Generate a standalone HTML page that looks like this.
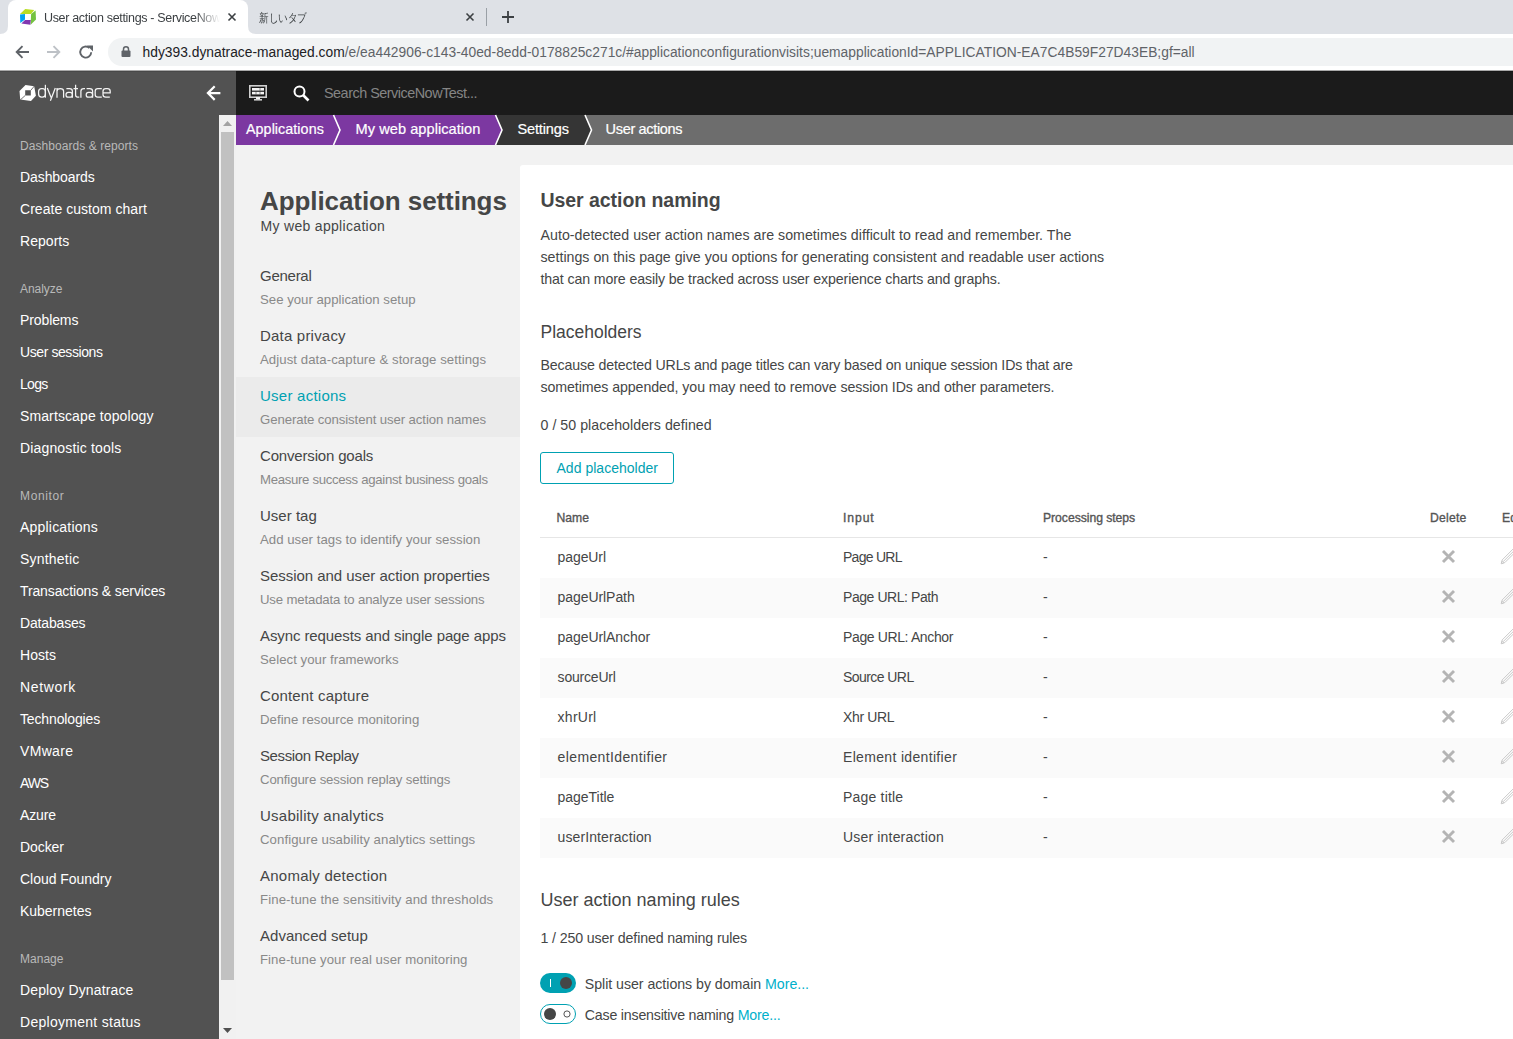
<!DOCTYPE html>
<html><head><meta charset="utf-8"><title>User action settings</title><style>
*{box-sizing:border-box;margin:0;padding:0}
html,body{width:1513px;height:1039px;overflow:hidden;background:#f2f2f2;font-family:"Liberation Sans",sans-serif;color:#454646}
.a{position:absolute;white-space:nowrap}
svg{position:absolute;overflow:visible}
</style></head><body>
<div class="a" style="left:0px;top:0px;width:1513px;height:70px;background:#dee1e6;"></div>
<div class="a" style="left:0px;top:34px;width:1513px;height:36px;background:#ffffff;"></div>
<div class="a" style="left:8px;top:0px;width:240px;height:34px;background:#ffffff;border-radius:8px 8px 0 0"></div>
<svg style="left:0;top:26px" width="8" height="8"><path d="M0 8 Q8 8 8 0 V8 Z" fill="#fff"/></svg>
<svg style="left:248px;top:26px" width="8" height="8"><path d="M8 8 Q0 8 0 0 V8 Z" fill="#fff"/></svg>
<svg style="left:14px;top:4px" width="28" height="26" viewBox="0 0 28 26">
<path d="M6 10 L11.25 4.9 L20.25 6.1 L17 9.9 Z" fill="#b9dd23"/>
<path d="M21.6 6.6 L22 15.5 L16.6 20.8 L17.1 10 Z" fill="#74c23f"/>
<path d="M6 10.6 L11 10 L11 15.4 L6.3 19 Z" fill="#00a3f0"/>
<path d="M11 16 L16.8 16 L16.3 20.8 L7.4 19.6 Z" fill="#8137b0"/>
</svg>
<div class="a" style="left:44px;top:10px;width:176px;overflow:hidden;font-size:12.5px;line-height:16px;color:#3c4043;letter-spacing:-0.33px;-webkit-mask-image:linear-gradient(90deg,#000 86%,transparent)">User action settings - ServiceNow</div>
<svg style="left:228px;top:13px" width="8" height="8"><path d="M0.5 0.5 L7.5 7.5 M7.5 0.5 L0.5 7.5" stroke="#3c4043" stroke-width="1.6"/></svg>
<div class="a" style="left:259px;top:10px;font-size:12px;line-height:16px;color:#3c4043;transform:scaleX(0.8);transform-origin:0 0">新しいタブ</div>
<svg style="left:466px;top:13px" width="8" height="8"><path d="M0.5 0.5 L7.5 7.5 M7.5 0.5 L0.5 7.5" stroke="#3c4043" stroke-width="1.6"/></svg>
<div class="a" style="left:486px;top:8px;width:1px;height:18px;background:#9aa0a6;"></div>
<svg style="left:502px;top:11px" width="12" height="12"><path d="M6 0 V12 M0 6 H12" stroke="#3c4043" stroke-width="1.8"/></svg>
<svg style="left:15px;top:45px" width="14" height="14" viewBox="0 0 14 14"><path d="M14 7 H2 M7.5 1.2 L1.7 7 L7.5 12.8" stroke="#5f6368" stroke-width="1.9" fill="none"/></svg>
<svg style="left:47px;top:45px" width="14" height="14" viewBox="0 0 14 14"><path d="M0 7 H12 M6.5 1.2 L12.3 7 L6.5 12.8" stroke="#bdc1c6" stroke-width="1.9" fill="none"/></svg>
<svg style="left:79px;top:45px" width="14" height="14" viewBox="0 0 14 14"><path d="M12.2 7.2 A5.5 5.5 0 1 1 10.4 3" stroke="#5f6368" stroke-width="1.9" fill="none"/><path d="M8 0.5 L14 0.5 L14 6.5 Z" fill="#5f6368"/></svg>
<div class="a" style="left:108px;top:38px;width:1450px;height:28px;background:#f1f3f4;border-radius:14px"></div>
<svg style="left:121px;top:46px" width="10" height="11" viewBox="0 0 10 11"><rect x="0.5" y="4.5" width="9" height="6.5" rx="1" fill="#5f6368"/><path d="M2.5 5 V3.3 A2.5 2.5 0 0 1 7.5 3.3 V5" stroke="#5f6368" stroke-width="1.5" fill="none"/></svg>
<div class="a" style="left:142.5px;top:44.32px;font-size:13.8px;line-height:18px;color:#202124;letter-spacing:0.016px;">hdy393.dynatrace-managed.com<span style="color:#5f6368">/e/ea442906-c143-40ed-8edd-0178825c271c/#applicationconfigurationvisits;uemapplicationId=APPLICATION-EA7C4B59F27D43EB;gf=all</span></div>
<div class="a" style="left:0px;top:70px;width:236px;height:969px;background:#525252;"></div>
<div class="a" style="left:236px;top:70px;width:1277px;height:45px;background:#1b1b1b;"></div>
<div class="a" style="left:0px;top:70px;width:1513px;height:1px;background:#a9a9a9;"></div>
<div class="a" style="left:0px;top:71px;width:1513px;height:1px;background:rgba(0,0,0,0.12);"></div>
<svg style="left:16px;top:80px" width="24" height="24" viewBox="0 0 24 24">
<path fill-rule="evenodd" d="M3.5 10.9 L9.5 5 L18.2 6.2 L19.9 15.7 L15 20.9 L4.2 19.6 Z M9.2 10.3 L14.8 10.3 L14.8 15.5 L9.2 15.5 Z" fill="#fff"/>
<path d="M18.4 6 L14.8 10.3 M9.2 15.5 L4.4 19.8" stroke="#525252" stroke-width="0.8"/>
</svg>
<svg style="left:34px;top:80px" width="80" height="24" viewBox="0 0 80 24" fill="none" stroke="#f4f4f4" stroke-width="1.25">
<rect x="4.6" y="8.5" width="6.8" height="8.6" rx="3"/><path d="M11.4 4.8 V17.7"/>
<path d="M13.3 8 L17.1 17.4 M21.3 8 L16.4 20.8"/>
<path d="M23 7.9 V17.7 M23 11.2 Q23 8.5 26.3 8.5 Q29.6 8.5 29.6 11.2 V17.7"/>
<path d="M32.4 8.6 H35.5 Q38.4 8.6 38.4 11.3 V17.7"/><rect x="32" y="12.4" width="6.4" height="4.8" rx="2.3"/>
<path d="M41.6 4.8 V15 Q41.6 17.1 43.6 17.1 H45.3 M39.5 8.5 H44"/>
<path d="M46.9 17.7 V11.2 Q46.9 8.5 49.8 8.5 H51"/>
<path d="M52.6 8.6 H55.7 Q58.6 8.6 58.6 11.3 V17.7"/><rect x="52.2" y="12.4" width="6.4" height="4.8" rx="2.3"/>
<path d="M67.8 8.6 H63.8 Q61.2 8.6 61.2 11.3 V14.4 Q61.2 17.1 63.8 17.1 H67.8"/>
<path d="M69 12.8 H76.2 V11.3 Q76.2 8.6 73.4 8.6 H71.8 Q69 8.6 69 11.3 V14.4 Q69 17.1 71.8 17.1 H75.8"/>
</svg>
<svg style="left:206px;top:85px" width="16" height="16" viewBox="0 0 16 16"><path d="M14.4 8.1 H2.2 M8.7 1.3 L1.9 8.1 L8.7 14.9" stroke="#fff" stroke-width="2.2" fill="none"/></svg>
<svg style="left:249px;top:85px" width="18" height="16" viewBox="0 0 18 16">
<rect x="0.8" y="0.8" width="16.4" height="11.4" fill="none" stroke="#d0d0d0" stroke-width="1.6"/>
<rect x="3" y="3" width="12" height="2.6" fill="#f4f4f4"/>
<rect x="3" y="6.8" width="12" height="2.6" fill="#f4f4f4"/>
<rect x="10.6" y="3" width="0.8" height="2.6" fill="#1b1b1b" opacity="0.6"/>
<rect x="6.6" y="6.8" width="0.8" height="2.6" fill="#1b1b1b" opacity="0.6"/>
<rect x="10.6" y="6.8" width="0.8" height="2.6" fill="#1b1b1b" opacity="0.6"/>
<rect x="7" y="12" width="4" height="2.2" fill="#f4f4f4"/>
<rect x="5" y="14" width="8" height="1.6" fill="#d0d0d0"/>
</svg>
<svg style="left:293.2px;top:84.8px" width="17" height="17" viewBox="0 0 17 17"><circle cx="6.5" cy="6.5" r="5" stroke="#fff" stroke-width="2" fill="none"/><path d="M10 10 L15.5 15.5" stroke="#fff" stroke-width="2.6"/></svg>
<div class="a" style="left:324px;top:83.51px;font-size:14.4px;line-height:19px;color:#858585;letter-spacing:-0.490px;">Search ServiceNowTest...</div>
<div class="a" style="left:20px;top:137.84px;font-size:12px;line-height:16px;color:#b9b9b9;letter-spacing:0.061px;">Dashboards &amp; reports</div>
<div class="a" style="left:20px;top:168.15px;font-size:14px;line-height:18px;color:#ffffff;letter-spacing:-0.078px;">Dashboards</div>
<div class="a" style="left:20px;top:200.15px;font-size:14px;line-height:18px;color:#ffffff;letter-spacing:0.041px;">Create custom chart</div>
<div class="a" style="left:20px;top:232.15px;font-size:14px;line-height:18px;color:#ffffff;letter-spacing:0.045px;">Reports</div>
<div class="a" style="left:20px;top:280.84px;font-size:12px;line-height:16px;color:#b9b9b9;letter-spacing:-0.051px;">Analyze</div>
<div class="a" style="left:20px;top:311.15px;font-size:14px;line-height:18px;color:#ffffff;letter-spacing:-0.106px;">Problems</div>
<div class="a" style="left:20px;top:343.15px;font-size:14px;line-height:18px;color:#ffffff;letter-spacing:-0.410px;">User sessions</div>
<div class="a" style="left:20px;top:375.15px;font-size:14px;line-height:18px;color:#ffffff;letter-spacing:-0.686px;">Logs</div>
<div class="a" style="left:20px;top:407.15px;font-size:14px;line-height:18px;color:#ffffff;letter-spacing:0.109px;">Smartscape topology</div>
<div class="a" style="left:20px;top:439.15px;font-size:14px;line-height:18px;color:#ffffff;letter-spacing:0.158px;">Diagnostic tools</div>
<div class="a" style="left:20px;top:487.84px;font-size:12px;line-height:16px;color:#b9b9b9;letter-spacing:0.631px;">Monitor</div>
<div class="a" style="left:20px;top:518.15px;font-size:14px;line-height:18px;color:#ffffff;letter-spacing:0.200px;">Applications</div>
<div class="a" style="left:20px;top:550.15px;font-size:14px;line-height:18px;color:#ffffff;letter-spacing:0.213px;">Synthetic</div>
<div class="a" style="left:20px;top:582.15px;font-size:14px;line-height:18px;color:#ffffff;letter-spacing:-0.127px;">Transactions &amp; services</div>
<div class="a" style="left:20px;top:614.15px;font-size:14px;line-height:18px;color:#ffffff;letter-spacing:-0.167px;">Databases</div>
<div class="a" style="left:20px;top:646.15px;font-size:14px;line-height:18px;color:#ffffff;letter-spacing:0.051px;">Hosts</div>
<div class="a" style="left:20px;top:678.15px;font-size:14px;line-height:18px;color:#ffffff;letter-spacing:0.657px;">Network</div>
<div class="a" style="left:20px;top:710.15px;font-size:14px;line-height:18px;color:#ffffff;letter-spacing:-0.139px;">Technologies</div>
<div class="a" style="left:20px;top:742.15px;font-size:14px;line-height:18px;color:#ffffff;letter-spacing:0.328px;">VMware</div>
<div class="a" style="left:20px;top:774.15px;font-size:14px;line-height:18px;color:#ffffff;letter-spacing:-1.137px;">AWS</div>
<div class="a" style="left:20px;top:806.15px;font-size:14px;line-height:18px;color:#ffffff;letter-spacing:-0.145px;">Azure</div>
<div class="a" style="left:20px;top:838.15px;font-size:14px;line-height:18px;color:#ffffff;letter-spacing:-0.072px;">Docker</div>
<div class="a" style="left:20px;top:870.15px;font-size:14px;line-height:18px;color:#ffffff;letter-spacing:-0.027px;">Cloud Foundry</div>
<div class="a" style="left:20px;top:902.15px;font-size:14px;line-height:18px;color:#ffffff;letter-spacing:-0.023px;">Kubernetes</div>
<div class="a" style="left:20px;top:950.84px;font-size:12px;line-height:16px;color:#b9b9b9;letter-spacing:0.025px;">Manage</div>
<div class="a" style="left:20px;top:981.15px;font-size:14px;line-height:18px;color:#ffffff;letter-spacing:0.135px;">Deploy Dynatrace</div>
<div class="a" style="left:20px;top:1013.15px;font-size:14px;line-height:18px;color:#ffffff;letter-spacing:0.284px;">Deployment status</div>
<div class="a" style="left:236px;top:115px;width:1277px;height:30px;background:#6d6d6d;"></div>
<svg style="left:236px;top:115px" width="360" height="30" viewBox="0 0 360 30">
<path d="M0 0 H349 L355.5 15 L349 30 H0 Z" fill="#353535"/>
<path d="M349 0 L355.5 15 L349 30" stroke="#fff" stroke-width="1.6" fill="none"/>
<path d="M0 0 H259.5 L266 15 L259.5 30 H0 Z" fill="#7c38a1"/>
<path d="M259.5 0 L266 15 L259.5 30" stroke="#fff" stroke-width="1.6" fill="none"/>
<path d="M0 0 H97.5 L104 15 L97.5 30 H0 Z" fill="#7c38a1"/>
<path d="M97.5 0 L104 15 L97.5 30" stroke="#fff" stroke-width="1.6" fill="none"/>
</svg>
<div class="a" style="left:246px;top:120.04px;font-size:14.3px;line-height:19px;color:#fff;letter-spacing:0.064px;-webkit-text-stroke:0.2px #fff">Applications</div>
<div class="a" style="left:355.5px;top:119.94px;font-size:14.6px;line-height:19px;color:#fff;letter-spacing:0.046px;-webkit-text-stroke:0.2px #fff">My web application</div>
<div class="a" style="left:517.4px;top:119.97px;font-size:14.5px;line-height:19px;color:#fff;letter-spacing:-0.115px;-webkit-text-stroke:0.2px #fff">Settings</div>
<div class="a" style="left:605.6px;top:119.97px;font-size:14.5px;line-height:19px;color:#fff;letter-spacing:-0.327px;-webkit-text-stroke:0.2px #fff">User actions</div>
<div class="a" style="left:219px;top:115px;width:17px;height:924px;background:#f1f1f1;"></div>
<div class="a" style="left:221px;top:132px;width:13px;height:848px;background:#c1c1c1;"></div>
<svg style="left:223px;top:121px" width="9" height="5"><path d="M0 5 L4.5 0 L9 5 Z" fill="#a3a3a3"/></svg>
<svg style="left:223px;top:1028px" width="9" height="5"><path d="M0 0 L4.5 5 L9 0 Z" fill="#505050"/></svg>
<div class="a" style="left:236px;top:145px;width:283px;height:894px;background:#f2f2f2;"></div>
<div class="a" style="left:260px;top:183.99px;font-size:26px;line-height:34px;color:#454646;font-weight:700;letter-spacing:-0.083px;">Application settings</div>
<div class="a" style="left:260.5px;top:217.45px;font-size:14px;line-height:18px;color:#454646;letter-spacing:0.314px;">My web application</div>
<div class="a" style="left:260px;top:265.80px;font-size:15px;line-height:20px;color:#454646;letter-spacing:-0.263px;">General</div>
<div class="a" style="left:260px;top:291.42px;font-size:13.2px;line-height:17px;color:#898989;letter-spacing:0.006px;">See your application setup</div>
<div class="a" style="left:260px;top:325.80px;font-size:15px;line-height:20px;color:#454646;letter-spacing:0.202px;">Data privacy</div>
<div class="a" style="left:260px;top:351.42px;font-size:13.2px;line-height:17px;color:#898989;letter-spacing:0.068px;">Adjust data-capture &amp; storage settings</div>
<div class="a" style="left:236px;top:377px;width:284px;height:60px;background:#ebebeb;"></div>
<div class="a" style="left:260px;top:385.80px;font-size:15px;line-height:20px;color:#00a1b2;letter-spacing:0.248px;">User actions</div>
<div class="a" style="left:260px;top:411.42px;font-size:13.2px;line-height:17px;color:#898989;letter-spacing:-0.096px;">Generate consistent user action names</div>
<div class="a" style="left:260px;top:445.80px;font-size:15px;line-height:20px;color:#454646;letter-spacing:-0.174px;">Conversion goals</div>
<div class="a" style="left:260px;top:471.42px;font-size:13.2px;line-height:17px;color:#898989;letter-spacing:-0.316px;">Measure success against business goals</div>
<div class="a" style="left:260px;top:505.80px;font-size:15px;line-height:20px;color:#454646;letter-spacing:0.014px;">User tag</div>
<div class="a" style="left:260px;top:531.42px;font-size:13.2px;line-height:17px;color:#898989;letter-spacing:0.030px;">Add user tags to identify your session</div>
<div class="a" style="left:260px;top:565.80px;font-size:15px;line-height:20px;color:#454646;letter-spacing:-0.036px;">Session and user action properties</div>
<div class="a" style="left:260px;top:591.42px;font-size:13.2px;line-height:17px;color:#898989;letter-spacing:-0.155px;">Use metadata to analyze user sessions</div>
<div class="a" style="left:260px;top:625.80px;font-size:15px;line-height:20px;color:#454646;letter-spacing:-0.101px;">Async requests and single page apps</div>
<div class="a" style="left:260px;top:651.42px;font-size:13.2px;line-height:17px;color:#898989;letter-spacing:0.034px;">Select your frameworks</div>
<div class="a" style="left:260px;top:685.80px;font-size:15px;line-height:20px;color:#454646;letter-spacing:0.161px;">Content capture</div>
<div class="a" style="left:260px;top:711.42px;font-size:13.2px;line-height:17px;color:#898989;letter-spacing:0.039px;">Define resource monitoring</div>
<div class="a" style="left:260px;top:745.80px;font-size:15px;line-height:20px;color:#454646;letter-spacing:-0.395px;">Session Replay</div>
<div class="a" style="left:260px;top:771.42px;font-size:13.2px;line-height:17px;color:#898989;letter-spacing:-0.121px;">Configure session replay settings</div>
<div class="a" style="left:260px;top:805.80px;font-size:15px;line-height:20px;color:#454646;letter-spacing:0.249px;">Usability analytics</div>
<div class="a" style="left:260px;top:831.42px;font-size:13.2px;line-height:17px;color:#898989;letter-spacing:0.071px;">Configure usability analytics settings</div>
<div class="a" style="left:260px;top:865.80px;font-size:15px;line-height:20px;color:#454646;letter-spacing:0.237px;">Anomaly detection</div>
<div class="a" style="left:260px;top:891.42px;font-size:13.2px;line-height:17px;color:#898989;letter-spacing:0.115px;">Fine-tune the sensitivity and thresholds</div>
<div class="a" style="left:260px;top:925.80px;font-size:15px;line-height:20px;color:#454646;letter-spacing:0.017px;">Advanced setup</div>
<div class="a" style="left:260px;top:951.42px;font-size:13.2px;line-height:17px;color:#898989;letter-spacing:0.063px;">Fine-tune your real user monitoring</div>
<div class="a" style="left:520px;top:165px;width:1100px;height:900px;background:#ffffff;border-radius:3px"></div>
<div class="a" style="left:540.5px;top:187.54px;font-size:19.5px;line-height:25px;color:#454646;font-weight:700;letter-spacing:-0.051px;">User action naming</div>
<div class="a" style="left:540.5px;top:226.08px;font-size:14.2px;line-height:18px;color:#454646;letter-spacing:0.027px;">Auto-detected user action names are sometimes difficult to read and remember. The</div>
<div class="a" style="left:540.5px;top:248.08px;font-size:14.2px;line-height:18px;color:#454646;letter-spacing:0.006px;">settings on this page give you options for generating consistent and readable user actions</div>
<div class="a" style="left:540.5px;top:270.08px;font-size:14.2px;line-height:18px;color:#454646;letter-spacing:-0.127px;">that can more easily be tracked across user experience charts and graphs.</div>
<div class="a" style="left:540.5px;top:320.73px;font-size:17.5px;line-height:23px;color:#454646;letter-spacing:-0.007px;">Placeholders</div>
<div class="a" style="left:540.5px;top:356.08px;font-size:14.2px;line-height:18px;color:#454646;letter-spacing:-0.152px;">Because detected URLs and page titles can vary based on unique session IDs that are</div>
<div class="a" style="left:540.5px;top:378.08px;font-size:14.2px;line-height:18px;color:#454646;letter-spacing:-0.086px;">sometimes appended, you may need to remove session IDs and other parameters.</div>
<div class="a" style="left:540.5px;top:415.78px;font-size:14.2px;line-height:18px;color:#454646;letter-spacing:0.028px;">0 / 50 placeholders defined</div>
<div class="a" style="left:540px;top:452px;width:134px;height:32px;background:#fff;border:1px solid #00a1b2;border-radius:3px"></div>
<div class="a" style="left:556.5px;top:458.85px;font-size:14px;line-height:18px;color:#00a1b2;letter-spacing:0.022px;">Add placeholder</div>
<div class="a" style="left:556.4px;top:509.57px;font-size:12.2px;line-height:16px;color:#555555;letter-spacing:0.061px;-webkit-text-stroke:0.35px #555555">Name</div>
<div class="a" style="left:843px;top:509.57px;font-size:12.2px;line-height:16px;color:#555555;letter-spacing:0.898px;-webkit-text-stroke:0.35px #555555">Input</div>
<div class="a" style="left:1043px;top:509.57px;font-size:12.2px;line-height:16px;color:#555555;letter-spacing:-0.041px;-webkit-text-stroke:0.35px #555555">Processing steps</div>
<div class="a" style="left:1430px;top:509.57px;font-size:12.2px;line-height:16px;color:#555555;letter-spacing:0.233px;-webkit-text-stroke:0.35px #555555">Delete</div>
<div class="a" style="left:1502px;top:509.57px;font-size:12.2px;line-height:16px;color:#555555;-webkit-text-stroke:0.35px #555555">Edit</div>
<div class="a" style="left:540px;top:537px;width:980px;height:1px;background:#e6e6e6;"></div>
<div class="a" style="left:557.6px;top:548.15px;font-size:14px;line-height:18px;color:#454646;letter-spacing:-0.105px;">pageUrl</div>
<div class="a" style="left:843px;top:548.15px;font-size:14px;line-height:18px;color:#454646;letter-spacing:-0.728px;">Page URL</div>
<div class="a" style="left:1043px;top:548.15px;font-size:14px;line-height:18px;color:#454646;">-</div>
<svg style="left:1441.7px;top:550px" width="13" height="13"><path d="M1 1 L12 12 M12 1 L1 12" stroke="#b4b4b4" stroke-width="2.9"/></svg>
<svg style="left:1500px;top:548px" width="20" height="18"><path d="M2.2 11.9 L15.2 -1.1 M3.5 13.3 L16.5 0.3 M4.8 14.6 L17.8 1.6 M1.2 15.8 L2.2 11.9 M1.2 15.8 L4.8 14.6" stroke="#c4c4c4" stroke-width="0.9" fill="none"/><circle cx="2.6" cy="14.3" r="1" stroke="#c4c4c4" stroke-width="0.8" fill="none"/></svg>
<div class="a" style="left:540px;top:578px;width:980px;height:40px;background:#fafafa;"></div>
<div class="a" style="left:557.6px;top:588.15px;font-size:14px;line-height:18px;color:#454646;letter-spacing:-0.073px;">pageUrlPath</div>
<div class="a" style="left:843px;top:588.15px;font-size:14px;line-height:18px;color:#454646;letter-spacing:-0.436px;">Page URL: Path</div>
<div class="a" style="left:1043px;top:588.15px;font-size:14px;line-height:18px;color:#454646;">-</div>
<svg style="left:1441.7px;top:590px" width="13" height="13"><path d="M1 1 L12 12 M12 1 L1 12" stroke="#b4b4b4" stroke-width="2.9"/></svg>
<svg style="left:1500px;top:588px" width="20" height="18"><path d="M2.2 11.9 L15.2 -1.1 M3.5 13.3 L16.5 0.3 M4.8 14.6 L17.8 1.6 M1.2 15.8 L2.2 11.9 M1.2 15.8 L4.8 14.6" stroke="#c4c4c4" stroke-width="0.9" fill="none"/><circle cx="2.6" cy="14.3" r="1" stroke="#c4c4c4" stroke-width="0.8" fill="none"/></svg>
<div class="a" style="left:557.6px;top:628.15px;font-size:14px;line-height:18px;color:#454646;letter-spacing:-0.074px;">pageUrlAnchor</div>
<div class="a" style="left:843px;top:628.15px;font-size:14px;line-height:18px;color:#454646;letter-spacing:-0.371px;">Page URL: Anchor</div>
<div class="a" style="left:1043px;top:628.15px;font-size:14px;line-height:18px;color:#454646;">-</div>
<svg style="left:1441.7px;top:630px" width="13" height="13"><path d="M1 1 L12 12 M12 1 L1 12" stroke="#b4b4b4" stroke-width="2.9"/></svg>
<svg style="left:1500px;top:628px" width="20" height="18"><path d="M2.2 11.9 L15.2 -1.1 M3.5 13.3 L16.5 0.3 M4.8 14.6 L17.8 1.6 M1.2 15.8 L2.2 11.9 M1.2 15.8 L4.8 14.6" stroke="#c4c4c4" stroke-width="0.9" fill="none"/><circle cx="2.6" cy="14.3" r="1" stroke="#c4c4c4" stroke-width="0.8" fill="none"/></svg>
<div class="a" style="left:540px;top:658px;width:980px;height:40px;background:#fafafa;"></div>
<div class="a" style="left:557.6px;top:668.15px;font-size:14px;line-height:18px;color:#454646;letter-spacing:-0.201px;">sourceUrl</div>
<div class="a" style="left:843px;top:668.15px;font-size:14px;line-height:18px;color:#454646;letter-spacing:-0.563px;">Source URL</div>
<div class="a" style="left:1043px;top:668.15px;font-size:14px;line-height:18px;color:#454646;">-</div>
<svg style="left:1441.7px;top:670px" width="13" height="13"><path d="M1 1 L12 12 M12 1 L1 12" stroke="#b4b4b4" stroke-width="2.9"/></svg>
<svg style="left:1500px;top:668px" width="20" height="18"><path d="M2.2 11.9 L15.2 -1.1 M3.5 13.3 L16.5 0.3 M4.8 14.6 L17.8 1.6 M1.2 15.8 L2.2 11.9 M1.2 15.8 L4.8 14.6" stroke="#c4c4c4" stroke-width="0.9" fill="none"/><circle cx="2.6" cy="14.3" r="1" stroke="#c4c4c4" stroke-width="0.8" fill="none"/></svg>
<div class="a" style="left:557.6px;top:708.15px;font-size:14px;line-height:18px;color:#454646;letter-spacing:0.251px;">xhrUrl</div>
<div class="a" style="left:843px;top:708.15px;font-size:14px;line-height:18px;color:#454646;letter-spacing:-0.365px;">Xhr URL</div>
<div class="a" style="left:1043px;top:708.15px;font-size:14px;line-height:18px;color:#454646;">-</div>
<svg style="left:1441.7px;top:710px" width="13" height="13"><path d="M1 1 L12 12 M12 1 L1 12" stroke="#b4b4b4" stroke-width="2.9"/></svg>
<svg style="left:1500px;top:708px" width="20" height="18"><path d="M2.2 11.9 L15.2 -1.1 M3.5 13.3 L16.5 0.3 M4.8 14.6 L17.8 1.6 M1.2 15.8 L2.2 11.9 M1.2 15.8 L4.8 14.6" stroke="#c4c4c4" stroke-width="0.9" fill="none"/><circle cx="2.6" cy="14.3" r="1" stroke="#c4c4c4" stroke-width="0.8" fill="none"/></svg>
<div class="a" style="left:540px;top:738px;width:980px;height:40px;background:#fafafa;"></div>
<div class="a" style="left:557.6px;top:748.15px;font-size:14px;line-height:18px;color:#454646;letter-spacing:0.368px;">elementIdentifier</div>
<div class="a" style="left:843px;top:748.15px;font-size:14px;line-height:18px;color:#454646;letter-spacing:0.331px;">Element identifier</div>
<div class="a" style="left:1043px;top:748.15px;font-size:14px;line-height:18px;color:#454646;">-</div>
<svg style="left:1441.7px;top:750px" width="13" height="13"><path d="M1 1 L12 12 M12 1 L1 12" stroke="#b4b4b4" stroke-width="2.9"/></svg>
<svg style="left:1500px;top:748px" width="20" height="18"><path d="M2.2 11.9 L15.2 -1.1 M3.5 13.3 L16.5 0.3 M4.8 14.6 L17.8 1.6 M1.2 15.8 L2.2 11.9 M1.2 15.8 L4.8 14.6" stroke="#c4c4c4" stroke-width="0.9" fill="none"/><circle cx="2.6" cy="14.3" r="1" stroke="#c4c4c4" stroke-width="0.8" fill="none"/></svg>
<div class="a" style="left:557.6px;top:788.15px;font-size:14px;line-height:18px;color:#454646;letter-spacing:-0.035px;">pageTitle</div>
<div class="a" style="left:843px;top:788.15px;font-size:14px;line-height:18px;color:#454646;letter-spacing:0.192px;">Page title</div>
<div class="a" style="left:1043px;top:788.15px;font-size:14px;line-height:18px;color:#454646;">-</div>
<svg style="left:1441.7px;top:790px" width="13" height="13"><path d="M1 1 L12 12 M12 1 L1 12" stroke="#b4b4b4" stroke-width="2.9"/></svg>
<svg style="left:1500px;top:788px" width="20" height="18"><path d="M2.2 11.9 L15.2 -1.1 M3.5 13.3 L16.5 0.3 M4.8 14.6 L17.8 1.6 M1.2 15.8 L2.2 11.9 M1.2 15.8 L4.8 14.6" stroke="#c4c4c4" stroke-width="0.9" fill="none"/><circle cx="2.6" cy="14.3" r="1" stroke="#c4c4c4" stroke-width="0.8" fill="none"/></svg>
<div class="a" style="left:540px;top:818px;width:980px;height:40px;background:#fafafa;"></div>
<div class="a" style="left:557.6px;top:828.15px;font-size:14px;line-height:18px;color:#454646;letter-spacing:0.099px;">userInteraction</div>
<div class="a" style="left:843px;top:828.15px;font-size:14px;line-height:18px;color:#454646;letter-spacing:0.177px;">User interaction</div>
<div class="a" style="left:1043px;top:828.15px;font-size:14px;line-height:18px;color:#454646;">-</div>
<svg style="left:1441.7px;top:830px" width="13" height="13"><path d="M1 1 L12 12 M12 1 L1 12" stroke="#b4b4b4" stroke-width="2.9"/></svg>
<svg style="left:1500px;top:828px" width="20" height="18"><path d="M2.2 11.9 L15.2 -1.1 M3.5 13.3 L16.5 0.3 M4.8 14.6 L17.8 1.6 M1.2 15.8 L2.2 11.9 M1.2 15.8 L4.8 14.6" stroke="#c4c4c4" stroke-width="0.9" fill="none"/><circle cx="2.6" cy="14.3" r="1" stroke="#c4c4c4" stroke-width="0.8" fill="none"/></svg>
<div class="a" style="left:540.5px;top:888.56px;font-size:18px;line-height:23px;color:#454646;letter-spacing:0.005px;">User action naming rules</div>
<div class="a" style="left:540.5px;top:928.88px;font-size:14.2px;line-height:18px;color:#454646;letter-spacing:-0.122px;">1 / 250 user defined naming rules</div>
<div class="a" style="left:540px;top:973px;width:36px;height:20px;background:#00a1b2;border-radius:10px"></div>
<div class="a" style="left:550px;top:979px;width:1px;height:8px;background:#ffffff;"></div>
<svg style="left:560px;top:977px" width="12" height="12"><circle cx="6" cy="6" r="6" fill="#454646"/></svg>
<div class="a" style="left:584.8px;top:974.78px;font-size:14.2px;line-height:18px;color:#454646;letter-spacing:-0.038px;">Split user actions by domain <span style="color:#00b0cb">More...</span></div>
<div class="a" style="left:540px;top:1004px;width:36px;height:20px;background:#ffffff;border:1.3px solid #00a1b2;border-radius:10px"></div>
<svg style="left:544px;top:1008px" width="12" height="12"><circle cx="6" cy="6" r="6" fill="#454646"/></svg>
<svg style="left:563px;top:1010px" width="8" height="8"><circle cx="4" cy="4" r="3.1" stroke="#555" stroke-width="1" fill="none"/></svg>
<div class="a" style="left:584.8px;top:1005.78px;font-size:14.2px;line-height:18px;color:#454646;letter-spacing:-0.202px;">Case insensitive naming <span style="color:#00b0cb">More...</span></div>
</body></html>
